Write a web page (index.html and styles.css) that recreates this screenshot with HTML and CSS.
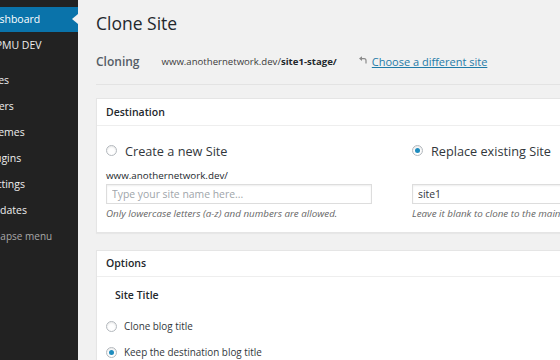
FILE: index.html
```html
<!DOCTYPE html>
<html lang="en">
<head>
<meta charset="utf-8">
<title>Clone Site</title>
<link rel="stylesheet" href="styles.css">
</head>
<body>
<div class="wrap">
  <nav class="sidebar">
    <ul class="menu">
      <li class="menu-item active"><span class="menu-text">Dashboard</span></li>
      <li class="menu-item"><span class="menu-text">WPMU DEV</span></li>
      <li class="menu-sep"></li>
      <li class="menu-item"><span class="menu-text">Sites</span></li>
      <li class="menu-item"><span class="menu-text">Users</span></li>
      <li class="menu-item"><span class="menu-text">Themes</span></li>
      <li class="menu-item"><span class="menu-text">Plugins</span></li>
      <li class="menu-item"><span class="menu-text">Settings</span></li>
      <li class="menu-item"><span class="menu-text">Updates</span></li>
      <li class="menu-item collapse"><span class="menu-text">Collapse menu</span></li>
    </ul>
  </nav>
  <main class="main">
    <h1 class="page-title">Clone Site</h1>
    <div class="cloning-row">
      <span class="cloning-label">Cloning</span>
      <span class="cloning-url">www.anothernetwork.dev/<strong>site1-stage/</strong></span>
      <span class="change-site">
        <svg class="undo-icon" width="8" height="8" viewBox="0 0 8 8" aria-hidden="true">
          <path d="M2.5 2.6 H5.2 Q7 2.6 7 4.6 V7.5" fill="none" stroke="#8a8a8a" stroke-width="1.2"/>
          <polygon points="0,2.6 3,0.3 3,4.9" fill="#8a8a8a"/>
        </svg>
        <a class="change-link" href="#">Choose a different site</a>
      </span>
    </div>
    <div class="divider"></div>

    <section class="box">
      <div class="box-header">Destination</div>
      <div class="box-body dest-grid">
        <div class="dest-col">
          <label class="radio-row big">
            <span class="radio"></span>
            <span>Create a new Site</span>
          </label>
          <div class="field-label">www.anothernetwork.dev/</div>
          <input class="text-input" type="text" placeholder="Type your site name here...">
          <p class="help">Only lowercase letters (a-z) and numbers are allowed.</p>
        </div>
        <div class="dest-col">
          <label class="radio-row big">
            <span class="radio checked"></span>
            <span>Replace existing Site</span>
          </label>
          <div class="field-label"></div>
          <input class="text-input" type="text" value="site1">
          <p class="help">Leave it blank to clone to the main site.</p>
        </div>
      </div>
    </section>

    <section class="box options">
      <div class="box-header">Options</div>
      <div class="box-body">
        <div class="sub-title">Site Title</div>
        <label class="radio-row small first">
          <span class="radio"></span>
          <span>Clone blog title</span>
        </label>
        <label class="radio-row small">
          <span class="radio checked"></span>
          <span>Keep the destination blog title</span>
        </label>
      </div>
    </section>
  </main>
</div>
</body>
</html>
```

FILE: styles.css
```css
html, body {
  margin: 0;
  padding: 0;
  width: 560px;
  height: 360px;
  overflow: hidden;
  background: #f1f1f1;
  font-family: "Open Sans", "Noto Sans", "Liberation Sans", sans-serif;
  color: #23282d;
}

.wrap {
  display: flex;
  height: 360px;
}

/* Sidebar */
.sidebar {
  flex: none;
  width: 78px;
  background: #222222;
  overflow: hidden;
}

.menu {
  list-style: none;
  margin: 0;
  padding: 7px 0 0 0;
}

.menu-item {
  position: relative;
  height: 26px;
  line-height: 26px;
  font-size: 10.5px;
  color: #eeeeee;
  white-space: nowrap;
}

.menu-item.active {
  height: 25px;
  line-height: 25px;
  background: #0a73aa;
  color: #ffffff;
}

.menu-item.active::after {
  content: "";
  position: absolute;
  right: 0;
  top: 7px;
  border-style: solid;
  border-width: 5.5px 6px 5.5px 0;
  border-color: transparent #f1f1f1 transparent transparent;
}

.menu-text {
  display: block;
  margin-left: -14px;
}

.menu-sep {
  height: 9px;
}

.menu-item.collapse {
  font-size: 10px;
  color: #a8a8a8;
}

.menu-item.collapse .menu-text {
  margin-left: -17px;
}

/* Main */
.main {
  flex: none;
  width: 620px;
  padding: 11px 0 0 18px;
}

.page-title {
  margin: 0;
  font-size: 17.5px;
  line-height: 24px;
  font-weight: 400;
  color: #23282d;
}

.cloning-row {
  margin-top: 18px;
  height: 16px;
  display: flex;
  align-items: center;
  white-space: nowrap;
}

.cloning-label {
  font-size: 12px;
  font-weight: 600;
  color: #555d66;
}

.cloning-url {
  margin-left: 22px;
  font-size: 9.6px;
  color: #3c3c3c;
}

.cloning-url strong {
  font-weight: 700;
  color: #23282d;
}

.change-site {
  margin-left: 22px;
  display: flex;
  align-items: center;
}

.undo-icon {
  margin-right: 5px;
  margin-top: -3px;
}

.change-link {
  font-size: 11px;
  color: #1f7ba8;
  text-decoration: underline;
}

.divider {
  margin-top: 15px;
  height: 1px;
  background: #e3e3e3;
}

/* Boxes */
.box {
  margin-top: 13px;
  width: 590px;
  background: #ffffff;
  border: 1px solid #e5e5e5;
  box-shadow: 0 1px 1px rgba(0, 0, 0, 0.04);
}

.box.options {
  margin-top: 17px;
}

.box-header {
  height: 26px;
  line-height: 26px;
  padding-left: 9px;
  font-size: 10.5px;
  font-weight: 600;
  color: #23282d;
  border-bottom: 1px solid #eeeeee;
}

.options .box-header {
  height: 25px;
  line-height: 25px;
}

.box-body {
  padding: 15px 9px 12px 9px;
}

.dest-grid {
  display: grid;
  grid-template-columns: 266px 266px;
  column-gap: 40px;
}

.dest-col {
  display: flex;
  flex-direction: column;
}

.radio-row {
  display: flex;
  align-items: center;
  gap: 8px;
  white-space: nowrap;
  color: #32373c;
}

.radio-row.big {
  height: 19px;
  font-size: 12.7px;
}

.radio-row.small {
  height: 16px;
  font-size: 9.9px;
  gap: 7px;
  margin-top: 10px;
}

.radio-row.small.first {
  margin-top: 15px;
}

.radio {
  flex: none;
  width: 9px;
  height: 9px;
  border: 1px solid #b4b9be;
  border-radius: 50%;
  background: #ffffff;
  box-shadow: inset 0 1px 2px rgba(0, 0, 0, 0.1);
  display: flex;
  align-items: center;
  justify-content: center;
}

.radio.checked::before {
  content: "";
  width: 5px;
  height: 5px;
  border-radius: 50%;
  background: #1e8cbe;
}

.field-label {
  margin-top: 9px;
  height: 14px;
  line-height: 14px;
  font-size: 9.8px;
  color: #23282d;
  white-space: nowrap;
}

.text-input {
  margin: 1px 0 0 0;
  box-sizing: border-box;
  width: 266px;
  height: 20px;
  padding: 0 5px;
  border: 1px solid #dddddd;
  box-shadow: inset 0 1px 2px rgba(0, 0, 0, 0.07);
  font-family: "Open Sans", "Noto Sans", "Liberation Sans", sans-serif;
  font-size: 10.4px;
  color: #32373c;
  background: #ffffff;
  outline: none;
}

.text-input::placeholder {
  color: #a0a5aa;
}

.help {
  margin: 3px 0 0 0;
  height: 13px;
  line-height: 13px;
  font-size: 9.8px;
  font-style: italic;
  color: #666666;
  white-space: nowrap;
}

.options .box-body {
  padding-top: 10px;
  padding-bottom: 10px;
}

.sub-title {
  margin-left: 9px;
  height: 16px;
  line-height: 16px;
  font-size: 10.5px;
  font-weight: 600;
  color: #23282d;
}
```
